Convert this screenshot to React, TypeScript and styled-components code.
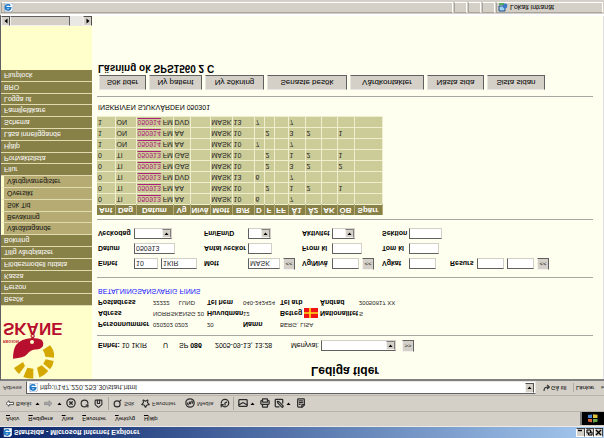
import React from 'react';
import styled, { createGlobalStyle } from 'styled-components';
import {
  CircleX, RotateCw, House, Search, Star, Disc3, History, Mail, Printer, SquarePen, FileText,
} from 'lucide-react';

const Global = createGlobalStyle`
  * { box-sizing: border-box; }
  body { margin: 0; background: #d4d0c8; font-family: "Liberation Sans", Arial, sans-serif; font-size: 7px; line-height: 9px; color: #000; }
  button, input, select { font: inherit; color: inherit; margin: 0; border-radius: 0; }
`;

/* The whole window is shown mirrored top to bottom. */
const Window = styled.div`
  min-height: 100vh;
  display: flex;
  flex-direction: column;
  transform: scaleY(-1);
  background: #d4d0c8;
  overflow: hidden;
`;

const TitleBar = styled.header`
  height: 11px;
  display: flex;
  align-items: center;
  gap: 2px;
  padding: 0 1px 0 2px;
  background: linear-gradient(90deg, #0a246a, #a6caf0);
  color: #fff;
`;
const TitleText = styled.span`
  flex: 1;
  font: bold 7px/9px "Liberation Sans", sans-serif;
  white-space: nowrap;
`;
const WindowButton = styled.button`
  width: 9px;
  height: 9px;
  padding: 0;
  display: grid;
  place-items: center;
  border: 1px solid;
  border-color: #fff #404040 #404040 #fff;
  background: #d4d0c8;
  color: #000;
`;
const WindowButtons = styled.div`
  display: flex;
`;

const MenuBar = styled.nav`
  height: 16px;
  display: flex;
  align-items: center;
  padding-left: 6px;
  gap: 9px;
  font-size: 6px;
  border-bottom: 1px solid #b8b4ac;
  border-top: 1px solid #eceae6;
`;
const MenuButton = styled.button`
  border: 0;
  padding: 0;
  background: none;
  &::first-letter { text-decoration: underline; }
`;
const Throbber = styled.div`
  margin-left: auto;
  width: 24px;
  height: 13px;
  display: grid;
  place-items: center;
  background: #000;
  border-left: 2px solid #808080;
`;

const ToolBar = styled.div`
  height: 16px;
  display: flex;
  align-items: center;
  padding-left: 5px;
  gap: 4px;
  font-size: 6px;
  color: #2c2c2c;
  border-bottom: 1px solid #b8b4ac;
`;
const ToolButton = styled.button<{ $w: number }>`
  width: ${p => p.$w}px;
  padding: 0;
  border: 0;
  background: none;
  display: flex;
  align-items: center;
  gap: 2px;
  white-space: nowrap;
  svg { flex: none; }
`;
const Divider = styled.span`
  width: 1px;
  height: 13px;
  background: #aaa69e;
`;

const AddressBar = styled.div`
  height: 14px;
  display: flex;
  align-items: center;
  padding-left: 3px;
  font-size: 6px;
`;
const AddressLabel = styled.label`
  width: 23px;
  color: #333;
`;
const AddressField = styled.div`
  flex: 1;
  height: 13px;
  display: flex;
  align-items: center;
  gap: 2px;
  padding: 1px;
  background: #fff;
  border: 1px solid;
  border-color: #606060 #e8e4dc #e8e4dc #606060;
`;
const AddressInput = styled.input`
  flex: 1;
  min-width: 0;
  padding: 0;
  border: 0;
  background: none;
  font: 7px/9px "Liberation Sans", sans-serif;
  color: #333;
`;
const ArrowButton = styled.button`
  width: 9px;
  height: 10px;
  padding: 0;
  display: grid;
  place-items: center;
  border: 1px solid;
  border-color: #f4f2ee #505050 #505050 #f4f2ee;
  background: #d4d0c8;
`;
const GoButton = styled.button`
  width: 30px;
  margin-left: 7px;
  padding: 0;
  border: 0;
  background: none;
  display: flex;
  align-items: center;
  gap: 1px;
`;
const LinksButton = styled(GoButton)`
  margin: 0;
  padding-left: 2px;
  width: 31px;
  border-left: 1px solid #b0aca4;
  justify-content: space-between;
`;

const Frames = styled.div`
  flex: 1;
  display: grid;
  grid-template-columns: 91px 1fr;
  border-top: 2px solid #808080;
  border-left: 1px solid #606060;
  border-bottom: 2px solid #fff;
`;
const Side = styled.aside`
  display: flex;
  flex-direction: column;
  background: #ffffcc;
  min-width: 0;
`;
const Logo = styled.svg`
  width: 90px;
  height: 62px;
  margin-bottom: 11px;
  flex: none;
`;
const NavList = styled.ul`
  list-style: none;
  margin: 0;
  padding: 0;
  height: 236px;
  display: grid;
  grid-template-rows: repeat(20, 1fr);
  background: #878047;
`;
const NavItem = styled.li<{ $sub?: boolean }>`
  padding-left: 3px;
  border-top: 1px solid #e0dcb0;
  display: flex;
  align-items: center;
  ${p => p.$sub && 'background: #b5ab73; border-left: 3px solid #ffffcc;'}
`;
const NavLink = styled.a<{ $sub?: boolean }>`
  font: 7px/9px "Liberation Sans", sans-serif;
  text-decoration: none;
  color: ${p => (p.$sub ? '#111' : '#fff')};
  white-space: nowrap;
`;
const SideScroll = styled.div`
  margin-top: auto;
  height: 10px;
  display: flex;
  background: #eae8e4;
`;
const Thumb = styled.div`
  width: 60px;
  border: 1px solid;
  border-color: #f4f2ee #606060 #606060 #f4f2ee;
  background: #d4d0c8;
`;
const Track = styled.div`
  flex: 1;
`;

const Main = styled.main`
  background: #fffff0;
  padding: 1px 10px 0 5px;
  border-right: 1px solid #e0dfe3;
  min-width: 0;
`;
const Heading = styled.h1`
  margin: 0;
  text-align: center;
  font: bold 12px/15px "Liberation Sans", sans-serif;
`;
const Rule = styled.hr`
  margin: 0;
  border: 0;
  height: 1px;
  background: #a8a8a0;
`;
const UnitRow = styled.div`
  display: grid;
  grid-template-columns: 65px 16px 36px 76px 30px 81px 14px;
  align-items: center;
  height: 12px;
  margin: 11px 0 4px 1px;
  white-space: nowrap;
`;
const PersonGrid = styled.dl`
  margin: 5px 0 0 1px;
  display: grid;
  grid-template-columns: 55px 54px 36px 37px 24px 16px 39px 1fr;
  grid-auto-rows: 11px;
  align-items: center;
  white-space: nowrap;
`;
const Term = styled.dt`
  font-weight: bold;
`;
const Value = styled.dd<{ $span?: number; $gap?: number }>`
  margin: 0;
  grid-column: span ${p => p.$span || 1};
  display: flex;
  gap: ${p => p.$gap || 0}px;
  font-size: 6px;
  color: #222;
`;
const Notice = styled.p`
  margin: 0 0 0 1px;
  height: 19px;
  line-height: 12px;
  color: #1414ff;
`;
const SearchGrid = styled.form`
  margin: 5px 0 6px 1px;
  display: grid;
  grid-template-columns: 36px 70px 44px 54px 30px 50px 27px 41px 27px 1fr;
  grid-template-rows: 16px 15px 15px;
  align-items: center;
  white-space: nowrap;
`;
const Label = styled.label`
  font-weight: bold;
`;
const Controls = styled.div<{ $span?: number }>`
  display: flex;
  align-items: center;
  gap: 3px;
  grid-column: span ${p => p.$span || 1};
`;
const TextBox = styled.input<{ $w: number }>`
  width: ${p => p.$w}px;
  height: 11px;
  padding: 0 1px;
  background: #fff;
  border: 1px solid;
  border-color: #606060 #d4d0c8 #d4d0c8 #606060;
  color: #222;
`;
const MoreButton = styled.button`
  width: 12px;
  height: 12px;
  padding: 0;
  font-size: 6px;
  line-height: 8px;
  background: #d4d0c8;
  border: 1px solid;
  border-color: #f4f2ee #606060 #606060 #f4f2ee;
`;
const SelectFrame = styled.div<{ $w: number }>`
  width: ${p => p.$w}px;
  height: 11px;
  display: grid;
  grid-template-columns: 1fr 9px;
  background: #fff;
  border: 1px solid;
  border-color: #606060 #d4d0c8 #d4d0c8 #606060;
`;
const Select = styled.select`
  grid-area: 1 / 1 / 2 / 3;
  min-width: 0;
  height: 9px;
  appearance: none;
  border: 0;
  padding: 0 10px 0 1px;
  background: none;
`;
const SelectArrow = styled.span`
  grid-area: 1 / 2;
  display: grid;
  place-items: center;
  pointer-events: none;
  background: #d4d0c8;
  border: 1px solid;
  border-color: #f4f2ee #808080 #808080 #f4f2ee;
`;

const Slots = styled.table`
  margin-top: 4px;
  width: 285px;
  table-layout: fixed;
  border-collapse: collapse;
  white-space: nowrap;
`;
const Head = styled.th`
  height: 10px;
  padding: 0;
  background: #878047;
  color: #fff;
  font-size: 8px;
  line-height: 9px;
  border-right: 1px solid #b5ab73;
`;
const Cell = styled.td`
  height: 11px;
  padding: 0 0 0 1px;
  line-height: 9px;
  background: #cccc99;
  border: 1px solid #efefd0;
  border-left: 0;
  color: #222;
`;
const DateLink = styled.a`
  color: #aa2277;
`;
const Status = styled.p`
  margin: 4px 0 6px 1px;
  height: 9px;
`;
const Actions = styled.div`
  margin: 6px 0 0 2px;
  display: flex;
  gap: 3px;
`;
const Action = styled.button<{ $w: number }>`
  width: ${p => p.$w}px;
  height: 15px;
  padding: 0;
  font-size: 8px;
  line-height: 9px;
  white-space: nowrap;
  background: #d4d0c8;
  border: 1px solid;
  border-color: #e8e6e0 #606060 #606060 #e8e6e0;
`;
const Result = styled.p`
  margin: 1px 0 0 1px;
  font: bold 10px/12px "Liberation Sans", sans-serif;
`;

const StatusBar = styled.footer`
  height: 14px;
  display: grid;
  grid-template-columns: 1fr 13px 13px 13px 107px;
  gap: 1px;
  padding: 1px 1px 2px 1px;
`;
const StatusPane = styled.div`
  display: flex;
  align-items: center;
  gap: 2px;
  padding-left: 1px;
  border: 1px solid;
  border-color: #a8a49c #fff #fff #a8a49c;
`;

const Down = () => (
  <svg width="5" height="3" viewBox="0 0 5 3"><path d="M0.5 0h4L2.5 2.6z" fill="#000" /></svg>
);
const SmallLeft = () => (
  <svg width="4" height="6" viewBox="0 0 4 6"><path d="M3.5 0.5v5L0.5 3z" fill="#000" /></svg>
);
const SmallRight = () => (
  <svg width="4" height="6" viewBox="0 0 4 6"><path d="M0.5 0.5v5L3.5 3z" fill="#000" /></svg>
);
const BrowserIcon = () => (
  <svg width="10" height="9" viewBox="0 0 10 9">
    <path d="M2 0h6l2 2v7H2z" fill="#fff" stroke="#7c93b8" strokeWidth="0.7" />
    <path d="M7.2 6.2a2.7 2.7 0 1 1 .5-2H2.8" fill="none" stroke="#1c78c8" strokeWidth="1.6" />
  </svg>
);
const ArrowIcon = ({ back }: { back?: boolean }) => (
  <svg width="9" height="7" viewBox="0 0 9 7">
    <path
      d={back ? 'M4 .7 1 3.5 4 6.3V4.6h4.5V2.4H4z' : 'M5 .7 8 3.5 5 6.3V4.6H.5V2.4H5z'}
      fill={back ? '#fff' : '#aaa'} stroke={back ? '#333' : '#888'} strokeWidth="0.8"
    />
  </svg>
);
const FlagIcon = () => (
  <svg width="14" height="10" viewBox="0 0 14 10">
    <path d="M0 0h14v10H0z" fill="#f01414" />
    <path d="M0 5h14M6 0v10" stroke="#ffe11a" strokeWidth="1.6" />
  </svg>
);

const Picker = ({ id, w }: { id: string; w: number }) => (
  <SelectFrame $w={w}>
    <Select id={id}><option> </option></Select>
    <SelectArrow><Down /></SelectArrow>
  </SelectFrame>
);

const nav = [
  'Besök', 'Person', 'Kassa', 'Flödesmodell utdata', 'Tillg vårdplatser', 'Bokning',
  '>Vårdåtagande', '>Bevakning', '>Sök Tid', '>Översikt', '>Vårdgivarregister', 'Filur',
  'Portvaktslista', 'Hjälp', 'Läsa inneliggande', 'Schema', 'Familjeläkare', 'Logga ut', 'BRO', 'Flurplock',
];

const columns: [string, number][] = [
  ['Ant', 18], ['Dag', 21], ['Datum', 37], ['Vg', 17], ['Nivå', 20], ['Mott', 22], ['B/R', 22],
  ['D', 10], ['F', 10], ['FF', 14], ['Å1', 17], ['Å2', 16], ['AK', 16], ['ÖB', 17], ['Spärr', 28],
];

const rows = [
  ['0', 'TI', '050913', 'AA', '', 'MASK', '10', '6', '', '', '7', '', '', '', ''],
  ['0', 'TI', '050913', 'AA', '', 'MASK', '10', '', '2', '', '1', '2', '', '1', ''],
  ['0', 'TI', '050913', 'DVD', '', 'MASK', '13', '6', '', '', '7', '', '', '', ''],
  ['0', 'TI', '050913', 'GAS', '', 'MASK', '10', '', '2', '', '3', '2', '', '2', ''],
  ['0', 'TI', '050913', 'GAS', '', 'MASK', '10', '', '2', '', '1', '2', '', '1', ''],
  ['1', 'ON', '050914', 'AA', '', 'MASK', '10', '7', '', '', '7', '', '', '', ''],
  ['1', 'ON', '050914', 'AA', '', 'MASK', '10', '', '2', '', '3', '2', '', '1', ''],
  ['1', 'ON', '050914', 'DVD', '', 'MASK', '13', '7', '', '', '7', '', '', '', ''],
];

const actions: [string, number][] = [
  ['Sök tider', 47], ['Ny patient', 53], ['Ny sökning', 59], ['Senaste besök', 80],
  ['Vårdkontakter', 74], ['Nästa sida', 57], ['Sista sidan', 58],
];

export default function App() {
  return (
    <>
      <Global />
      <Window>
        <TitleBar>
          <BrowserIcon />
          <TitleText>Startsida - Microsoft Internet Explorer</TitleText>
          <WindowButtons>
            <WindowButton aria-label="Minimera"><svg width="7" height="7"><path d="M1 5.5h4" stroke="#000" strokeWidth="1.4" /></svg></WindowButton>
            <WindowButton aria-label="Återställ"><svg width="7" height="7"><path d="M2.5 3V1h3.5v3H4.5M1 3h3.5v3H1z" fill="none" stroke="#000" /></svg></WindowButton>
            <WindowButton aria-label="Stäng"><svg width="7" height="7"><path d="M1 1l5 5M6 1L1 6" stroke="#000" strokeWidth="1.4" /></svg></WindowButton>
          </WindowButtons>
        </TitleBar>
        <MenuBar>
          {['Arkiv', 'Redigera', 'Visa', 'Favoriter', 'Verktyg', 'Hjälp'].map(m => <MenuButton key={m}>{m}</MenuButton>)}
          <Throbber>
            <svg width="10" height="9" viewBox="0 0 10 9">
              <path d="M0 1.5l4-1V4H0z" fill="#d8643c" /><path d="M5 .5l4.5.8V4H5z" fill="#6aa84f" />
              <path d="M0 5h4v3.5L0 8z" fill="#4a86d8" /><path d="M5 5h4.5v3.2L5 8.7z" fill="#e0c040" />
            </svg>
          </Throbber>
        </MenuBar>
        <ToolBar>
          <ToolButton $w={26}><ArrowIcon back />Bakåt</ToolButton>
          <ToolButton $w={5} aria-label="Bakåtlista"><Down /></ToolButton>
          <ToolButton $w={9} aria-label="Framåt"><ArrowIcon /></ToolButton>
          <ToolButton $w={5} aria-label="Framåtlista"><Down /></ToolButton>
          <ToolButton $w={10} aria-label="Stopp"><CircleX size={10} strokeWidth={3} /></ToolButton>
          <ToolButton $w={10} aria-label="Uppdatera"><RotateCw size={9} strokeWidth={3} /></ToolButton>
          <ToolButton $w={10} aria-label="Startsida"><House size={9} strokeWidth={3} /></ToolButton>
          <Divider />
          <ToolButton $w={24}><Search size={9} strokeWidth={3} />Sök</ToolButton>
          <ToolButton $w={40}><Star size={9} strokeWidth={3} />Favoriter</ToolButton>
          <ToolButton $w={31}><Disc3 size={10} strokeWidth={3} />Media</ToolButton>
          <ToolButton $w={9} aria-label="Tidigare"><History size={10} strokeWidth={3} /></ToolButton>
          <Divider />
          <ToolButton $w={18} aria-label="E-post"><Mail size={10} strokeWidth={3} /><Down /></ToolButton>
          <ToolButton $w={10} aria-label="Skriv ut"><Printer size={10} strokeWidth={3} /></ToolButton>
          <ToolButton $w={18} aria-label="Redigera"><SquarePen size={10} strokeWidth={3} /><Down /></ToolButton>
          <ToolButton $w={10} aria-label="Diskutera"><FileText size={10} strokeWidth={3} /></ToolButton>
        </ToolBar>
        <AddressBar>
          <AddressLabel htmlFor="address">Adress</AddressLabel>
          <AddressField>
            <BrowserIcon />
            <AddressInput id="address" defaultValue="http://147.220.253.30/start.html" />
            <ArrowButton aria-label="Visa adresser"><Down /></ArrowButton>
          </AddressField>
          <GoButton>
            <svg width="7" height="8" viewBox="0 0 7 8"><path d="M1 1c0 4 2 4 5 4M4 3l2.3 2L4 7" fill="none" stroke="#333" strokeWidth="1.2" /></svg>
            Gå till
          </GoButton>
          <LinksButton><span>Länkar</span><span>»</span></LinksButton>
        </AddressBar>
        <Frames>
          <Side>
            <Logo viewBox="0 0 90 62">
              <g fill="#d4a800">
                <path d="M41.7 29L49 33.7Q54 28 53 21.3L44.3 22.3Q44 26 41.7 29z" />
                <path d="M44.7 19.7L52.7 18Q52 13 49 9.7L42.3 15.3z" />
                <path d="M40.7 13.7L47.3 8Q43 3 38.3 1.5L36 11.3z" />
                <path d="M32.3 10.3V.5Q27 .3 22.3 2L26.3 11.3z" />
                <path d="M24 13L18 5Q15 7.5 13 11L22 17z" />
              </g>
              <path d="M12 20.3Q12 29 15 34Q20 40.5 31 41Q38 41 41 39Q43 36 42 33Q39 29 34 29.5Q29 29 26 24.7Q23 21 12 20.3z" fill="#b80f2e" />
              <circle cx="31" cy="37" r="2" fill="#ffffcc" />
              <text x="2" y="39" fontSize="4" fontWeight="bold" fill="#b80f2e">REGION</text>
              <text x="2" y="56" fontSize="17" fontWeight="bold" fill="#b80f2e">SKÅNE</text>
            </Logo>
            <NavList>
              {nav.map(n => {
                const sub = n.startsWith('>');
                return <NavItem key={n} $sub={sub}><NavLink href="#" $sub={sub}>{n.replace('>', '')}</NavLink></NavItem>;
              })}
            </NavList>
            <SideScroll>
              <ArrowButton aria-label="Vänster"><SmallLeft /></ArrowButton>
              <Thumb /><Track />
              <ArrowButton aria-label="Höger"><SmallRight /></ArrowButton>
            </SideScroll>
          </Side>
          <Main>
            <Heading>Lediga tider</Heading>
            <UnitRow>
              <span><b>Enhet:</b> 10 1KIR</span><span>U</span><span>SP <b>086</b></span>
              <span>2005-09-13, 13:28</span><label htmlFor="menu">Menyval:</label>
              <Picker id="menu" w={75} /><MoreButton>&gt;&gt;</MoreButton>
            </UnitRow>
            <Rule />
            <PersonGrid>
              <Term>Personnummer</Term><Value>020202 0202</Value><Value>20</Value><Term>Namn</Term><Value $span={4}>BERG, LISA</Value>
              <Term>Adress</Term><Value>NORRSKENSG 20</Value><Term>Huvudman</Term><Value>12</Value><Term>Betreg</Term><Value><FlagIcon /></Value><Term>Nationalitet</Term><Value>S</Value>
              <Term>Postadress</Term><Value $gap={9}><span>22222</span><span>LUND</span></Value><Term>Tel hem</Term><Value>040-242424</Value><Term>Tel arb</Term><Value /><Term>Ändrad</Term><Value>20050817 XX</Value>
            </PersonGrid>
            <Notice>BETALNINGSANSVARIG FINNS</Notice>
            <Rule />
            <SearchGrid>
              <Label htmlFor="unit">Enhet</Label>
              <Controls><TextBox id="unit" $w={24} defaultValue="10" /><TextBox aria-label="Enhetsnamn" $w={36} defaultValue="1KIR" /></Controls>
              <Label htmlFor="mott">Mott</Label>
              <Controls><TextBox id="mott" $w={32} defaultValue="MASK" /><MoreButton type="button">&lt;&lt;</MoreButton></Controls>
              <Label htmlFor="vg">Vg/Nivå</Label>
              <Controls><TextBox id="vg" $w={27} /><MoreButton type="button">&lt;&lt;</MoreButton></Controls>
              <Label htmlFor="vgkat">Vgkat</Label>
              <Controls><TextBox id="vgkat" $w={27} /></Controls>
              <Label htmlFor="res">Resurs</Label>
              <Controls><TextBox id="res" $w={27} /><TextBox aria-label="Resurs 2" $w={27} /><MoreButton type="button">&lt;&lt;</MoreButton></Controls>

              <Label htmlFor="date">Datum</Label>
              <Controls><TextBox id="date" $w={41} defaultValue="050913" /></Controls>
              <Label htmlFor="weeks">Antal veckor</Label>
              <Controls><TextBox id="weeks" $w={24} /></Controls>
              <Label htmlFor="from">From kl</Label>
              <Controls><TextBox id="from" $w={30} /></Controls>
              <Label htmlFor="to">Tom kl</Label>
              <Controls $span={3}><TextBox id="to" $w={30} /></Controls>

              <Label htmlFor="day">Veckodag</Label>
              <Controls><Picker id="day" w={38} /></Controls>
              <Label htmlFor="fm">Fm/Em/D</Label>
              <Controls><Picker id="fm" w={23} /></Controls>
              <Label htmlFor="act">Aktivitet</Label>
              <Controls><Picker id="act" w={23} /></Controls>
              <Label htmlFor="sec">Sektion</Label>
              <Controls $span={3}><TextBox id="sec" $w={33} /></Controls>
            </SearchGrid>
            <Rule />
            <Slots>
              <colgroup>{columns.map(([n, w]) => <col key={n} width={w} />)}</colgroup>
              <thead><tr>{columns.map(([n]) => <Head key={n}>{n}</Head>)}</tr></thead>
              <tbody>
                {rows.map((r, i) => (
                  <tr key={i}>
                    {r.map((c, j) => <Cell key={j}>{j === 2 ? <><DateLink href="#">{c}</DateLink> FM</> : c}</Cell>)}
                  </tr>
                ))}
              </tbody>
            </Slots>
            <Status>INSKRIVEN SJUKVÅRDEN 050301</Status>
            <Rule />
            <Actions>{actions.map(([a, w]) => <Action key={a} $w={w}>{a}</Action>)}</Actions>
            <Result>Läsning ok SPS1560 2 C</Result>
          </Main>
        </Frames>
        <StatusBar>
          <StatusPane><BrowserIcon /></StatusPane>
          <StatusPane /><StatusPane /><StatusPane />
          <StatusPane>
            <svg width="10" height="9" viewBox="0 0 10 9">
              <path d="M1 1h6v5H1z" fill="#9fd0f0" stroke="#205080" /><circle cx="7" cy="6" r="2.4" fill="#3c78c8" /><path d="M1 8h5" stroke="#30a040" strokeWidth="1.5" />
            </svg>
            Lokalt intranät
          </StatusPane>
        </StatusBar>
      </Window>
    </>
  );
}
